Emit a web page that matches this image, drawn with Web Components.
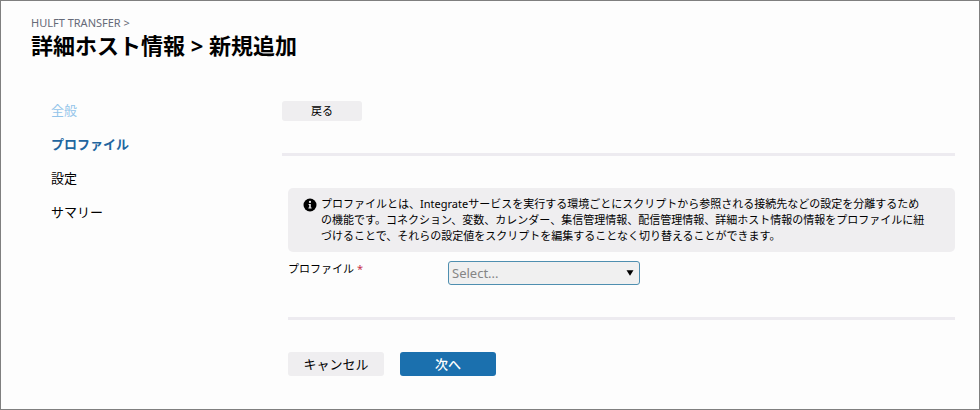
<!DOCTYPE html>
<html lang="ja">
<head>
<meta charset="utf-8">
<title>詳細ホスト情報 &gt; 新規追加</title>
<style>
body{
    margin: 0;
    font-family: "Noto Sans", "Noto Sans CJK JP", sans-serif;
    font-size: 13px;
    color: #000;
    background-color: #fdfdfd;
    --grey: #efeef0;
    --rule: #edebf0;
    --blue: #1b70ae;
}
</style>
</head>
<body>
<host-page>
    <page-title slot="header" parent="HULFT TRANSFER >">詳細ホスト情報 &gt; 新規追加</page-title>
    <wizard-nav slot="nav">
        <wizard-step state="done">全般</wizard-step>
        <wizard-step state="current">プロファイル</wizard-step>
        <wizard-step>設定</wizard-step>
        <wizard-step>サマリー</wizard-step>
    </wizard-nav>
    <app-button slot="back" kind="small">戻る</app-button>
    <info-note>プロファイルとは、Integrateサービスを実行する環境ごとにスクリプトから参照される接続先などの設定を分離するための機能です。コネクション、変数、カレンダー、集信管理情報、配信管理情報、詳細ホスト情報の情報をプロファイルに紐づけることで、それらの設定値をスクリプトを編集することなく切り替えることができます。</info-note>
    <select-field label="プロファイル" placeholder="Select..."></select-field>
    <app-button slot="actions">キャンセル</app-button>
    <app-button slot="actions" kind="primary">次へ</app-button>
</host-page>

<script>
function makeTemplate(html){
    const template = document.createElement('template');
    template.innerHTML = html;
    return template;
}

class BaseElement extends HTMLElement{
    constructor(){
        super();
        this.attachShadow({mode: 'open'});
        this.shadowRoot.append(this.constructor.template.content.cloneNode(true));
    }
}

class HostPage extends BaseElement{
    static template = makeTemplate(`
<style>
:host{
    display: block;
    box-sizing: border-box;
    min-height: 100vh;
    padding: 14px 24px 24px 30px;
    border: 1px solid #7f7f7f;
}

.columns{
    display: grid;
    grid-template-columns: 251px 1fr;
    margin-top: 34px;
}

nav{
    padding-left: 20px;
}

main{
    padding-top: 8px;
}

hr{
    height: 3px;
    margin: 32px 0;
    border: 0;
    background-color: var(--rule);
}

.content{
    padding-left: 6px;
}

.actions{
    display: flex;
    gap: 16px;
}
</style>
<header><slot name="header"></slot></header>
<div class="columns">
    <nav><slot name="nav"></slot></nav>
    <main>
        <slot name="back"></slot>
        <hr>
        <div class="content">
            <slot></slot>
            <hr>
            <div class="actions"><slot name="actions"></slot></div>
        </div>
    </main>
</div>
`);
}

class PageTitle extends BaseElement{
    static template = makeTemplate(`
<style>
:host{
    display: block;
}

p{
    margin: 0;
    font-size: 11px;
    line-height: 16px;
    color: #666a78;
}

h1{
    margin: 0;
    font-size: 22px;
    line-height: 28px;
    font-weight: 700;
}
</style>
<p></p>
<h1><slot></slot></h1>
`);

    connectedCallback(){
        this.shadowRoot.querySelector('p').textContent = this.getAttribute('parent');
    }
}

class WizardNav extends BaseElement{
    static template = makeTemplate(`
<style>
:host{
    display: flex;
    flex-direction: column;
}
</style>
<slot></slot>
`);
}

class WizardStep extends BaseElement{
    static template = makeTemplate(`
<style>
:host{
    display: block;
    line-height: 34px;
}

a{
    color: inherit;
    text-decoration: none;
}

:host([state="done"]){
    color: #93c4ea;
}

:host([state="current"]){
    color: #21659f;
    font-weight: 700;
}
</style>
<a href="#"><slot></slot></a>
`);
}

class AppButton extends BaseElement{
    static template = makeTemplate(`
<style>
:host{
    display: flex;
}

button{
    min-width: 96px;
    height: 24px;
    padding: 0 8px;
    border: 0;
    border-radius: 3px;
    font: inherit;
    line-height: 24px;
    color: inherit;
    background-color: var(--grey);
    cursor: pointer;
}

:host([kind="primary"]) button{
    color: #fff;
    font-weight: 500;
    background-color: var(--blue);
}

:host([kind="small"]) button{
    min-width: 80px;
    height: 20px;
    font-size: 11px;
    line-height: 20px;
}
</style>
<button type="button"><slot></slot></button>
`);
}

class InfoNote extends BaseElement{
    static template = makeTemplate(`
<style>
:host{
    display: flex;
    gap: 4px;
    padding: 8px 28px 8px 15px;
    border-radius: 5px;
    font-size: 11px;
    line-height: 16px;
    background-color: var(--grey);
}

svg{
    flex: none;
    width: 14px;
    height: 14px;
    margin-top: 2px;
}

p{
    margin: 0;
}
</style>
<svg viewBox="0 0 14 14" aria-hidden="true">
    <circle cx="7" cy="7" r="6.5" fill="#000"/>
    <circle cx="7" cy="3.9" r="1.1" fill="#efeef0"/>
    <path d="M5.6 6h2.2v3.6h.8v1H5.4v-1h.8V7h-.6z" fill="#efeef0"/>
</svg>
<p><slot></slot></p>
`);
}

class SelectField extends BaseElement{
    static template = makeTemplate(`
<style>
:host{
    display: grid;
    grid-template-columns: 160px 192px;
    margin-top: 9px;
}

label{
    font-size: 11px;
    line-height: 16px;
}

label span{
    color: #c8324b;
}

.box{
    display: grid;
    align-items: center;
}

select, svg{
    grid-area: 1 / 1;
}

select{
    appearance: none;
    width: 100%;
    height: 24px;
    padding: 0 24px 0 3px;
    border: 1px solid #4f8fb0;
    border-radius: 3px;
    font: inherit;
    color: #858585;
    background-color: #f0f0f0;
}

svg{
    justify-self: end;
    width: 8px;
    height: 6px;
    margin-right: 6px;
    pointer-events: none;
}
</style>
<label for="field"></label>
<div class="box">
    <select id="field" required><option value=""></option></select>
    <svg viewBox="0 0 8 6" aria-hidden="true"><path d="M.5.3h7L4 5.8z"/></svg>
</div>
`);

    connectedCallback(){
        const mark = document.createElement('span');
        mark.textContent = '*';
        this.shadowRoot.querySelector('label').append(this.getAttribute('label') + ' ', mark);
        this.shadowRoot.querySelector('option').textContent = this.getAttribute('placeholder');
    }
}

window.customElements.define('host-page', HostPage);
window.customElements.define('page-title', PageTitle);
window.customElements.define('wizard-nav', WizardNav);
window.customElements.define('wizard-step', WizardStep);
window.customElements.define('app-button', AppButton);
window.customElements.define('info-note', InfoNote);
window.customElements.define('select-field', SelectField);
</script>
</body>
</html>
